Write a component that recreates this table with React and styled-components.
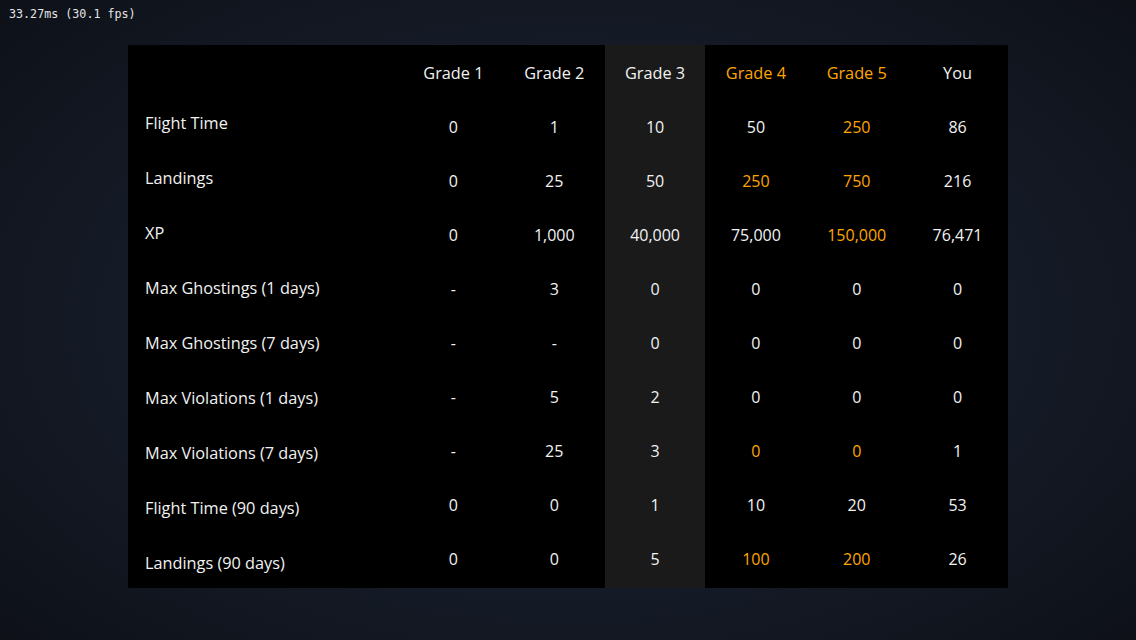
import React from 'react';
import styled, { createGlobalStyle } from 'styled-components';

const GlobalStyle = createGlobalStyle`
  html, body {
    margin: 0;
    padding: 0;
    height: 100%;
  }
  body {
    background: radial-gradient(ellipse 70% 75% at 50% 50%, #1d2433 0%, #151b27 55%, #0d1017 100%);
    color: #f2f2f2;
    font-family: 'Open Sans', 'Noto Sans', sans-serif;
  }
  #root {
    min-height: 100%;
  }
`;

const Page = styled.div`
  width: 1136px;
  height: 640px;
  display: flex;
  flex-direction: column;
  box-sizing: border-box;
`;

const Fps = styled.div`
  font-family: 'DejaVu Sans Mono', 'Liberation Mono', monospace;
  font-size: 11.7px;
  color: #e4e4e4;
  padding: 7px 0 0 9px;
  height: 45px;
  box-sizing: border-box;
`;

const Table = styled.div`
  margin-left: 128px;
  width: 880px;
  height: 543px;
  background: #000;
  display: flex;
`;

const LabelColumn = styled.div`
  width: 275px;
  display: flex;
  flex-direction: column;
  padding-top: 50px;
  box-sizing: border-box;
`;

const Label = styled.div`
  height: 55px;
  flex-shrink: 0;
  display: flex;
  align-items: center;
  padding-left: 17px;
  font-size: 16.3px;
`;

const ValueColumn = styled.div`
  flex: 1;
  display: flex;
  flex-direction: column;
  background: ${p => (p.$highlight ? '#1a1a1a' : 'transparent')};
`;

const Header = styled.div`
  height: 55px;
  flex-shrink: 0;
  display: flex;
  align-items: center;
  justify-content: center;
  font-size: 16.3px;
  color: ${p => (p.$gold ? '#ffa500' : '#f2f2f2')};
`;

const Cell = styled.div`
  height: 54px;
  flex-shrink: 0;
  display: flex;
  align-items: center;
  justify-content: center;
  font-size: 16px;
  color: ${p => (p.$gold ? '#ffa500' : '#f2f2f2')};
`;

const labels = [
  'Flight Time',
  'Landings',
  'XP',
  'Max Ghostings (1 days)',
  'Max Ghostings (7 days)',
  'Max Violations (1 days)',
  'Max Violations (7 days)',
  'Flight Time (90 days)',
  'Landings (90 days)'
];

// '*' prefix marks a gold value
const columns = [
  { title: 'Grade 1', values: ['0', '0', '0', '-', '-', '-', '-', '0', '0'] },
  { title: 'Grade 2', values: ['1', '25', '1,000', '3', '-', '5', '25', '0', '0'] },
  { title: 'Grade 3', highlight: true, values: ['10', '50', '40,000', '0', '0', '2', '3', '1', '5'] },
  { title: 'Grade 4', gold: true, values: ['50', '*250', '75,000', '0', '0', '0', '*0', '10', '*100'] },
  { title: 'Grade 5', gold: true, values: ['*250', '*750', '*150,000', '0', '0', '0', '*0', '20', '*200'] },
  { title: 'You', values: ['86', '216', '76,471', '0', '0', '0', '1', '53', '26'] }
];

const App = () => (
  <Page>
    <GlobalStyle />
    <Fps>33.27ms (30.1 fps)</Fps>
    <Table>
      <LabelColumn>
        {labels.map(l => (
          <Label key={l}>{l}</Label>
        ))}
      </LabelColumn>
      {columns.map(col => (
        <ValueColumn key={col.title} $highlight={col.highlight}>
          <Header $gold={col.gold}>{col.title}</Header>
          {col.values.map((v, i) => (
            <Cell key={i} $gold={v.startsWith('*')}>
              {v.replace('*', '')}
            </Cell>
          ))}
        </ValueColumn>
      ))}
    </Table>
  </Page>
);

export default App;
